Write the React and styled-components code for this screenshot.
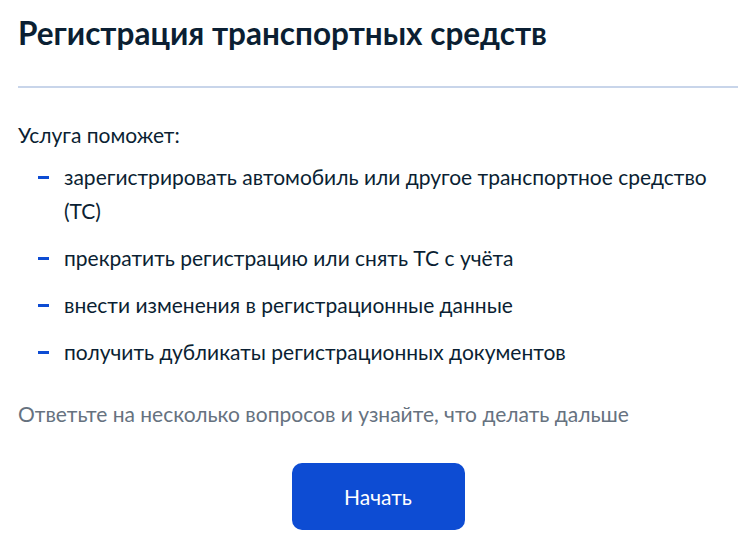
import React from "react";
import styled, { createGlobalStyle } from "styled-components";

const GlobalStyle = createGlobalStyle`
  body {
    margin: 0;
    background: #ffffff;
    font-family: Lato, "Noto Sans", sans-serif;
    color: #0b1f33;
  }
`;

const Page = styled.div`
  width: 720px;
  margin: 0 auto;
  padding-top: 13px;
`;

const Title = styled.h1`
  margin: 0;
  font-size: 31.5px;
  font-weight: 700;
  line-height: 40px;
  color: #0b1f33;
`;

const Divider = styled.hr`
  margin: 33px 0 0;
  border: none;
  border-top: 2px solid #c8d5ea;
`;

const Lead = styled.p`
  margin: 32px 0 0;
  font-size: 21px;
  line-height: 30px;
`;

const List = styled.ul`
  list-style: none;
  margin: 10px 0 0;
  padding: 0 0 0 20px;
`;

const Item = styled.li`
  position: relative;
  padding-left: 26px;
  font-size: 21px;
  line-height: 34px;
  margin-bottom: 13px;

  &:last-child {
    margin-bottom: 0;
  }

  &::before {
    content: "";
    position: absolute;
    left: 0;
    top: 16px;
    width: 11px;
    height: 3px;
    background: #0d4cd3;
  }
`;

const Hint = styled.p`
  margin: 30px 0 0;
  font-size: 21px;
  line-height: 30px;
  color: #66727f;
`;

const Actions = styled.div`
  display: flex;
  justify-content: center;
  margin-top: 34px;
`;

const Button = styled.button`
  width: 173px;
  height: 67px;
  border: none;
  border-radius: 10px;
  background: #0d4cd3;
  color: #ffffff;
  font-family: Lato, "Noto Sans", sans-serif;
  font-size: 21px;
  cursor: pointer;
`;

const items = [
  "зарегистрировать автомобиль или другое транспортное средство (ТС)",
  "прекратить регистрацию или снять ТС с учёта",
  "внести изменения в регистрационные данные",
  "получить дубликаты регистрационных документов",
];

export default function App() {
  return (
    <>
      <GlobalStyle />
      <Page>
        <Title>Регистрация транспортных средств</Title>
        <Divider />
        <Lead>Услуга поможет:</Lead>
        <List>
          {items.map((text) => (
            <Item key={text}>{text}</Item>
          ))}
        </List>
        <Hint>Ответьте на несколько вопросов и узнайте, что делать дальше</Hint>
        <Actions>
          <Button>Начать</Button>
        </Actions>
      </Page>
    </>
  );
}
